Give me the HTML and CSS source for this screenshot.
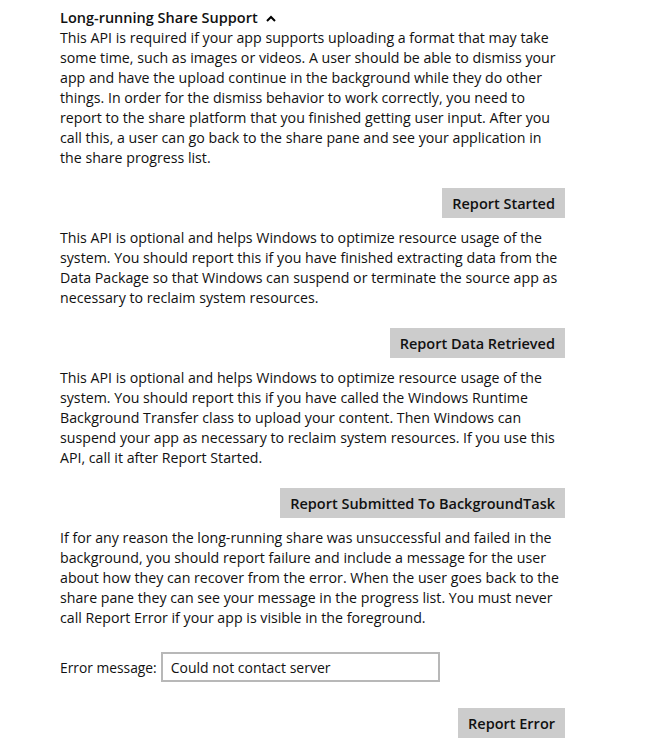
FILE: index.html
```html
<!DOCTYPE html>
<html>
<head>
<meta charset="utf-8">
<link rel="stylesheet" href="styles.css">
</head>
<body>
<div class="panel">
  <h2 class="heading">Long-running Share Support <svg class="chev" width="10" height="7" viewBox="0 0 10 7"><path d="M1 6 L5 2 L9 6" fill="none" stroke="#000" stroke-width="2"/></svg></h2>
  <p class="desc">This API is required if your app supports uploading a format that may take some time, such as images or videos. A user should be able to dismiss your app and have the upload continue in the background while they do other things. In order for the dismiss behavior to work correctly, you need to report to the share platform that you finished getting user input. After you call this, a user can go back to the share pane and see your application in the share progress list.</p>
  <div class="actions"><button class="btn">Report Started</button></div>
  <p class="desc">This API is optional and helps Windows to optimize resource usage of the system. You should report this if you have finished extracting data from the Data Package so that Windows can suspend or terminate the source app as necessary to reclaim system resources.</p>
  <div class="actions"><button class="btn">Report Data Retrieved</button></div>
  <p class="desc">This API is optional and helps Windows to optimize resource usage of the system. You should report this if you have called the Windows Runtime Background Transfer class to upload your content. Then Windows can suspend your app as necessary to reclaim system resources. If you use this API, call it after Report Started.</p>
  <div class="actions"><button class="btn">Report Submitted To BackgroundTask</button></div>
  <p class="desc">If for any reason the long-running share was unsuccessful and failed in the background, you should report failure and include a message for the user about how they can recover from the error. When the user goes back to the share pane they can see your message in the progress list. You must never call Report Error if your app is visible in the foreground.</p>
  <div class="field">
    <label class="label" for="err">Error message:</label>
    <input class="input" id="err" type="text" value="Could not contact server">
  </div>
  <div class="actions"><button class="btn">Report Error</button></div>
</div>
</body>
</html>
```

FILE: styles.css
```css
html, body {
  margin: 0;
  padding: 0;
  background: #ffffff;
}
body {
  font-family: "Open Sans", "Noto Sans", sans-serif;
  color: #111111;
}
.panel {
  width: 505px;
  margin-left: 60px;
  padding-top: 8px;
}
.heading {
  margin: 0;
  font-size: 14.5px;
  line-height: 20px;
  font-weight: 600;
  display: flex;
  align-items: center;
  gap: 8px;
}
.chev {
  display: block;
  margin-top: 1px;
}
.desc {
  margin: 0;
  font-size: 14.2px;
  line-height: 20px;
}
.actions {
  display: flex;
  justify-content: flex-end;
  margin: 20px 0 10px;
}
.btn {
  font-family: inherit;
  font-size: 14.5px;
  font-weight: 600;
  color: #111111;
  background: #cccccc;
  border: none;
  height: 30px;
  padding: 0 10px;
  margin: 0;
}
.field {
  display: flex;
  align-items: center;
  gap: 4px;
  margin-top: 24px;
}
.label {
  font-size: 13.8px;
}
.input {
  box-sizing: border-box;
  width: 279px;
  height: 30px;
  border: 2px solid #b8b8b8;
  font-family: inherit;
  font-size: 14px;
  color: #111111;
  padding: 0 8px;
  margin: 0;
}
.field + .actions {
  margin-top: 26px;
}
```
